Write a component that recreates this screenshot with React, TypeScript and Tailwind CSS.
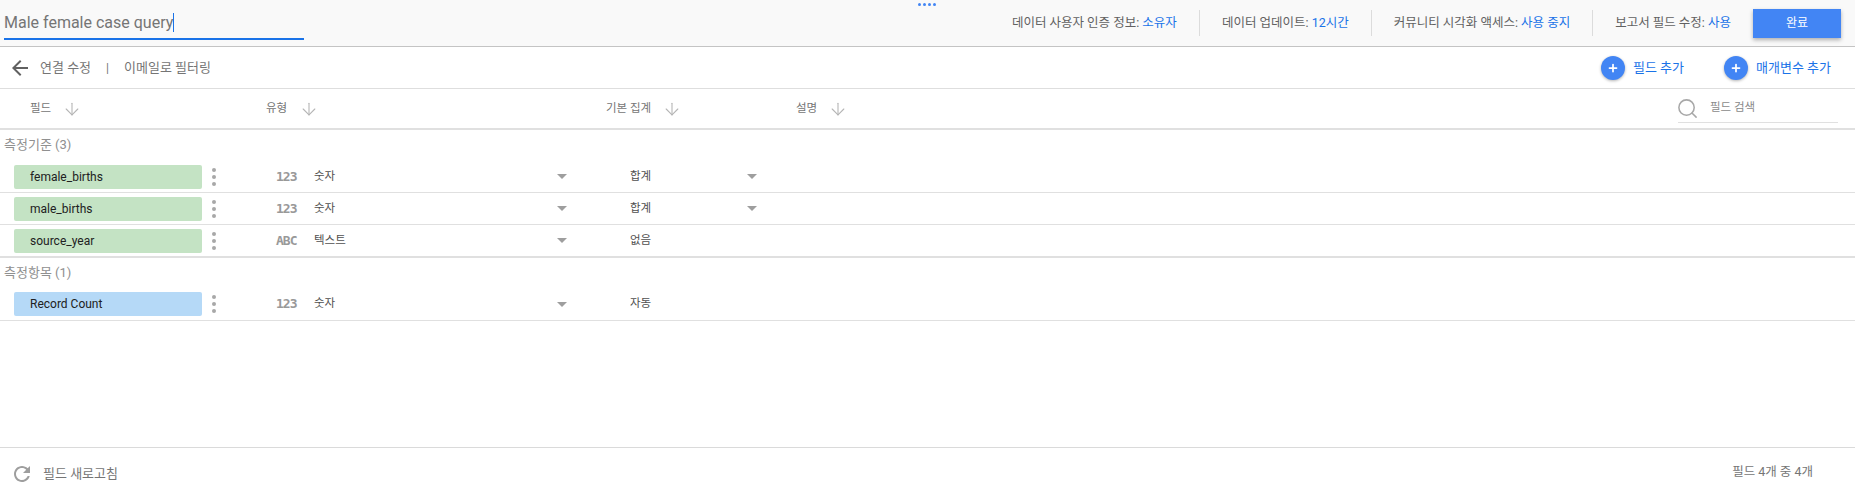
import React from 'react';
import { ArrowDown, Plus, Search } from 'lucide-react';

const font = { fontFamily: 'Roboto, "Noto Sans CJK KR", sans-serif' };

const SortHead = ({ label, width }: { label: string; width: string }) => (
  <div className={`flex items-center ${width}`}>
    <span className="text-[11.5px] text-[#757575]">{label}</span>
  </div>
);

const Arrow = () => <ArrowDown className="w-5 h-5 text-[#b5b5b5]" strokeWidth={1.3} />;

const Caret = () => <div className="w-0 h-0 border-x-[5px] border-x-transparent border-t-[5px] border-t-[#9e9e9e]" />;

const Dots = () => (
  <div className="flex flex-col gap-[3px] ml-[10px]">
    <span className="w-[4px] h-[4px] rounded-full bg-[#a8a8a8]" />
    <span className="w-[4px] h-[4px] rounded-full bg-[#a8a8a8]" />
    <span className="w-[4px] h-[4px] rounded-full bg-[#a8a8a8]" />
  </div>
);

type FieldRow = { name: string; icon: string; type: string; agg: string; aggCaret?: boolean };

const Row = ({ row, color, className }: { row: FieldRow; color: string; className: string }) => (
  <div className={`flex items-center pl-[14px] ${className}`}>
    <div className={`w-[188px] h-6 rounded-[2px] pl-[16px] flex items-center text-[12px] text-[#212121] ${color}`}>{row.name}</div>
    <Dots />
    <span className="w-[20px] ml-[60px] text-[13px] font-bold text-[#999999] text-center whitespace-nowrap" style={{ fontFamily: '"DejaVu Sans Mono", monospace', letterSpacing: '-1px' }}>{row.icon}</span>
    <span className="w-[243px] ml-[18px] text-[11.5px] text-[#505050]">{row.type}</span>
    <Caret />
    <span className="w-[117px] ml-[63px] text-[11.5px] text-[#505050]">{row.agg}</span>
    {row.aggCaret && <Caret />}
  </div>
);

const Info = ({ label, value, last }: { label: string; value: string; last?: boolean }) => (
  <div className={`flex items-center h-[26px] text-[12.5px] text-[#616161] ${last ? '' : 'border-r border-[#dcdcdc] pr-[22px] mr-[22px]'}`}>
    {label}&nbsp;<span className="text-[#1a73e8]">{value}</span>
  </div>
);

const AddButton = ({ label }: { label: string }) => (
  <div className="flex items-center gap-2">
    <span className="w-6 h-6 rounded-full bg-[#4285f4] flex items-center justify-center shadow-[0_1px_3px_rgba(0,0,0,0.3)]">
      <Plus className="w-3 h-3 text-white" strokeWidth={3.5} />
    </span>
    <span className="text-[13px] text-[#1a73e8]">{label}</span>
  </div>
);

const dims: FieldRow[] = [
  { name: 'female_births', icon: '123', type: '숫자', agg: '합계', aggCaret: true },
  { name: 'male_births', icon: '123', type: '숫자', agg: '합계', aggCaret: true },
  { name: 'source_year', icon: 'ABC', type: '텍스트', agg: '없음' },
];

const metrics: FieldRow[] = [{ name: 'Record Count', icon: '123', type: '숫자', agg: '자동' }];

export default function App() {
  return (
    <div className="w-[1855px] h-[496px] bg-white flex flex-col overflow-hidden" style={font}>
      {/* top bar */}
      <div className="relative h-[47px] shrink-0 bg-[#f9f9f9] border-b border-[#c4c4c4] flex items-center pl-[4px] pr-[14px]">
        <div className="w-[300px] h-[36px] self-start mt-[4px] pt-[3px] border-b-2 border-[#1a73e8] flex items-center text-[16px] text-[#757575]">
          Male female case query<span className="w-px h-[19px] bg-[#1a73e8]" />
        </div>
        <div className="absolute left-[918px] top-[3px] flex gap-[2px]">
          {[0, 1, 2, 3].map((i) => (
            <span key={i} className="w-[3px] h-[3px] rounded-full bg-[#4285f4]" />
          ))}
        </div>
        <div className="ml-auto flex items-center">
          <Info label="데이터 사용자 인증 정보:" value="소유자" />
          <Info label="데이터 업데이트:" value="12시간" />
          <Info label="커뮤니티 시각화 액세스:" value="사용 중지" />
          <Info label="보고서 필드 수정:" value="사용" last />
          <div className="w-[88px] h-[29px] ml-[22px] bg-[#4285f4] flex items-center justify-center text-white text-[12px] shadow-[0_2px_4px_rgba(0,0,0,0.3)]">완료</div>
        </div>
      </div>

      {/* sub bar */}
      <div className="h-[42px] shrink-0 border-b border-[#dedede] flex items-center pl-[8px] pr-[24px]">
        <svg viewBox="0 0 24 24" className="w-6 h-6 fill-[#616161]">
          <path d="M20 11H7.83l5.59-5.59L12 4l-8 8 8 8 1.41-1.41L7.83 13H20v-2z" />
        </svg>
        <span className="ml-[8px] text-[13px] text-[#757575]">연결 수정</span>
        <span className="ml-[15px] text-[12px] text-[#757575]">|</span>
        <span className="ml-[15px] text-[13px] text-[#757575]">이메일로 필터링</span>
        <div className="ml-auto flex items-center gap-[40px]">
          <AddButton label="필드 추가" />
          <AddButton label="매개변수 추가" />
        </div>
      </div>

      {/* column header */}
      <div className="h-[41px] shrink-0 border-b-2 border-[#e0e0e0] flex items-center pl-[30px] pr-[17px]">
        <SortHead label="필드" width="w-[32px]" />
        <Arrow />
        <div className="w-[184px]" />
        <SortHead label="유형" width="w-[33px]" />
        <Arrow />
        <div className="w-[287px]" />
        <SortHead label="기본 집계" width="w-[56px]" />
        <Arrow />
        <div className="w-[114px]" />
        <SortHead label="설명" width="w-[32px]" />
        <Arrow />
        <div className="ml-auto w-[160px] h-[29px] border-b border-[#e0e0e0] flex items-center">
          <Search className="w-[23px] h-[23px] -ml-[2px] text-[#a8a8a8]" strokeWidth={1.6} />
          <span className="ml-[11px] text-[11.5px] text-[#8a8a8a]">필드 검색</span>
        </div>
      </div>

      {/* dimensions */}
      <div className="h-[31px] shrink-0 flex items-center pl-[4px] pb-[2px] text-[13px] text-[#909090]">측정기준 (3)</div>
      <div className="flex flex-col">
        {dims.map((r, i) => (
          <Row key={r.name} row={r} color="bg-[#c4e3c4]" className={i < 2 ? 'h-8 border-b border-[#e0e0e0]' : 'h-[33px] border-b-2 border-[#e0e0e0]'} />
        ))}
      </div>

      {/* metrics */}
      <div className="h-[30px] shrink-0 flex items-center pl-[4px] text-[13px] text-[#909090]">측정항목 (1)</div>
      <div className="flex flex-col">
        {metrics.map((r) => (
          <Row key={r.name} row={r} color="bg-[#b5d9f7]" className="h-[33px] border-b border-[#e0e0e0]" />
        ))}
      </div>

      {/* footer */}
      <div className="mt-auto h-[49px] shrink-0 border-t border-[#dadada] flex items-center pl-[10px] pr-[42px]">
        <svg viewBox="0 0 24 24" className="w-6 h-6 mt-[3px] fill-[#9e9e9e]">
          <path d="M17.65 6.35C16.2 4.9 14.21 4 12 4c-4.42 0-7.99 3.58-7.99 8s3.57 8 7.99 8c3.73 0 6.84-2.55 7.73-6h-2.08c-.82 2.33-3.04 4-5.65 4-3.31 0-6-2.69-6-6s2.69-6 6-6c1.66 0 3.14.69 4.22 1.78L13 11h7V4l-2.35 2.35z" />
        </svg>
        <span className="ml-[9px] mt-[3px] text-[13px] text-[#757575]">필드 새로고침</span>
        <span className="ml-auto text-[12.5px] text-[#757575]">필드 4개 중 4개</span>
      </div>
    </div>
  );
}
